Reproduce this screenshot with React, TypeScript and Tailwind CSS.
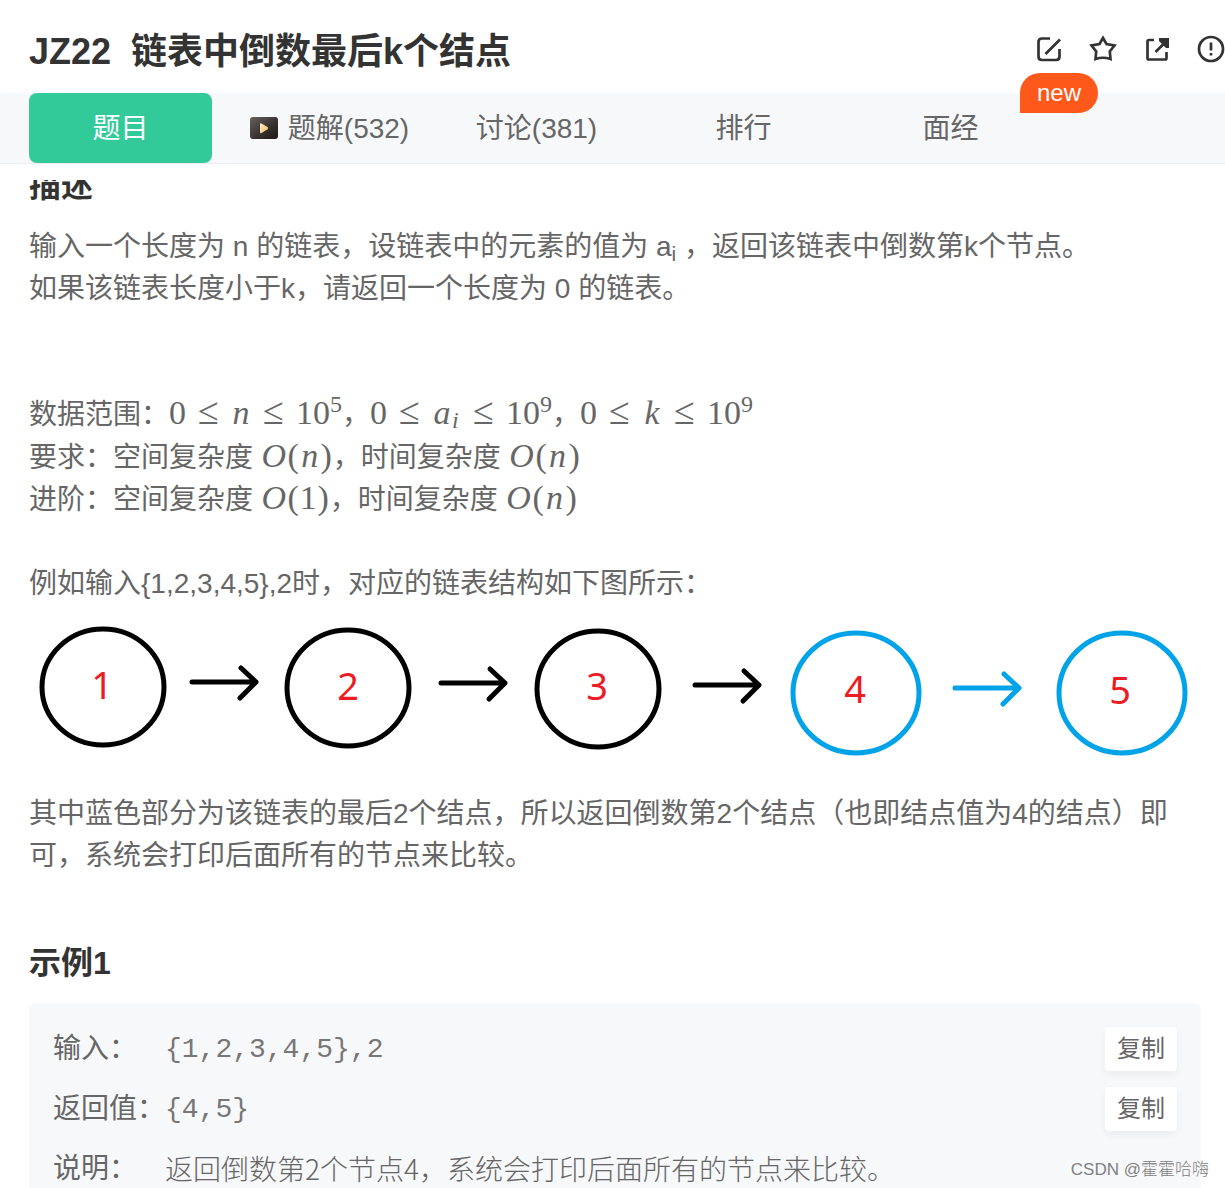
import type { ReactNode } from 'react'

const tabs = [
    { label: '题解(532)', video: true },
    { label: '讨论(381)' },
    { label: '排行' },
    { label: '面经', isNew: true },
]

const nodes = [
    { value: 1, cx: 74, cy: 82, rx: 61, ry: 58, tx: 73, ty: 94, color: '#000000' },
    { value: 2, cx: 319, cy: 83, rx: 61, ry: 58, tx: 319, ty: 95, color: '#000000' },
    { value: 3, cx: 569, cy: 84, rx: 61, ry: 58, tx: 568, ty: 95, color: '#000000' },
    { value: 4, cx: 827, cy: 88, rx: 63, ry: 60, tx: 826, ty: 98, color: '#00a2e8' },
    { value: 5, cx: 1093, cy: 88, rx: 63, ry: 60, tx: 1091, ty: 99, color: '#00a2e8' },
]

const arrows = [
    { x: 163, y: 77, color: '#000000' },
    { x: 412, y: 78, color: '#000000' },
    { x: 666, y: 80, color: '#000000' },
    { x: 926, y: 83, color: '#00a2e8' },
]

function IconButton({ label, children }: { label: string; children: ReactNode }) {
    return (
        <button type="button" aria-label={label} className="size-7 shrink-0 text-[#333333]">
            <svg viewBox="0 0 28 28" className="size-7" fill="none" stroke="currentColor" strokeWidth="2.7">
                {children}
            </svg>
        </button>
    )
}

function VideoIcon() {
    return (
        <svg viewBox="0 0 28 28" className="size-7 shrink-0" aria-hidden="true">
            <defs>
                <linearGradient id="video-bg" x1="0" y1="0" x2="1" y2="1">
                    <stop offset="0" stopColor="#666260" />
                    <stop offset="0.6" stopColor="#35302f" />
                    <stop offset="1" stopColor="#1c1817" />
                </linearGradient>
                <linearGradient id="video-play" x1="0" y1="0" x2="1" y2="1">
                    <stop offset="0" stopColor="#fff0c8" />
                    <stop offset="1" stopColor="#f5bd5e" />
                </linearGradient>
            </defs>
            <rect x="0" y="2" width="28" height="22" rx="3" fill="url(#video-bg)" />
            <path d="M10 9.500q0-1.800 1.500-1l6 3.500q1.500 1 0 2.200l-6 3.900q-1.500.7-1.500-1z" fill="url(#video-play)" />
        </svg>
    )
}

// Small helpers for inline formulas
function Rel() {
    return <span className="mx-2 inline-block w-[29px] text-center text-[38px] leading-none">≤</span>
}

function Var({ children }: { children: string }) {
    return <span className="inline-block w-5 text-center italic">{children}</span>
}

function Sup({ children }: { children: ReactNode }) {
    return <span className="relative -top-3 text-[24px] leading-none">{children}</span>
}

function MathText({ children }: { children: ReactNode }) {
    return (
        <span className="font-['Liberation_Serif','Noto_Sans_CJK_SC',serif] text-[34px] leading-none whitespace-nowrap">
            {children}
        </span>
    )
}

function BigO({ children }: { children: ReactNode }) {
    return (
        <MathText>
            <span className="inline-block w-[26px] text-center italic">O</span>
            <span className="inline-block w-[13px] text-center">(</span>
            {children}
            <span className="inline-block w-[13px] text-center">)</span>
        </MathText>
    )
}

function ListDiagram() {
    return (
        <svg viewBox="0 0 1172 188" className="block w-full" role="img" aria-label="1 → 2 → 3 → 4 → 5">
            {nodes.map(node => (
                <g key={node.value}>
                    <ellipse cx={node.cx} cy={node.cy} rx={node.rx} ry={node.ry} fill="none" stroke={node.color} strokeWidth="5" />
                    <text x={node.tx} y={node.ty} textAnchor="middle" fill="#ed1c24" className="font-['Noto_Sans',sans-serif] text-[38px]">
                        {node.value}
                    </text>
                </g>
            ))}
            {arrows.map(arrow => (
                <path
                    key={arrow.x}
                    d={`M${arrow.x} ${arrow.y}h64m-15 -14l15 14l-16 16`}
                    fill="none"
                    stroke={arrow.color}
                    strokeWidth="5"
                    strokeLinecap="round"
                    strokeLinejoin="round"
                />
            ))}
        </svg>
    )
}

function ExampleRow({ label, copy, children }: { label: string; copy?: boolean; children: ReactNode }) {
    return (
        <div className="flex h-11 items-center">
            <span className="w-28 shrink-0 whitespace-nowrap">{label}</span>
            <span className="flex-1 whitespace-nowrap">{children}</span>
            {copy && (
                <button type="button" className="h-11 w-[72px] rounded-sm bg-white text-[24px] leading-[44px] shadow-[0_4px_8px_rgba(0,0,0,0.05)]">
                    复制
                </button>
            )}
        </div>
    )
}

export default function App() {
    return (
        <div className="relative flex h-screen flex-col overflow-hidden bg-white font-['Liberation_Sans','Noto_Sans_CJK_SC',sans-serif] text-[28px] leading-[42px] text-[#666666]">
            <header className="flex h-[93px] shrink-0 items-center justify-between pt-[5px] pl-[29px]">
                <h1 className="pt-[5px] text-[36px] font-bold whitespace-pre text-[#333333]">JZ22  链表中倒数最后k个结点</h1>
                <div className="flex gap-[26px]">
                    <IconButton label="编辑">
                        <path d="M15 3.500H7Q3.500 3.500 3.500 7V21.500Q3.500 25 7 25H21Q24.500 25 24.500 21.500V14M10.500 19L25 4.500" />
                    </IconButton>
                    <IconButton label="收藏">
                        <path d="M14 3L17.500 9L25.500 10.500L20.800 16.500L21.500 24Q14 21.500 6.500 24L7.200 16.500L2.500 10.500L10.500 9Z" />
                    </IconButton>
                    <IconButton label="分享">
                        <path d="M11 5H6Q4.500 5 4.500 6.500V23Q4.500 24.500 6 24.500H22Q23.500 24.500 23.500 23V17M12.500 17L24 5.500" />
                        <path d="M16 3H26V13H23L16 6Z" fill="currentColor" stroke="none" />
                    </IconButton>
                    <IconButton label="反馈">
                        <circle cx="14" cy="14" r="12" />
                        <path d="M14 7.500V15.500M14 18V20.500" />
                    </IconButton>
                </div>
            </header>

            <nav className="flex h-[71px] shrink-0 border-b border-[#eceef1] bg-[#f7f8fa] pl-[29px]">
                <button type="button" className="w-[183px] shrink-0 rounded-lg bg-[#32ca99] pt-0.5 text-white">
                    题目
                </button>
                <div className="ml-[14px] flex">
                    {tabs.map(tab => (
                        <button key={tab.label} type="button" className="relative flex w-[207px] items-center justify-center gap-[10px] pt-0.5">
                            {tab.video && <VideoIcon />}
                            {tab.label}
                            {tab.isNew && (
                                <span className="absolute -top-5 left-[173px] h-10 w-[78px] rounded-[20px] rounded-bl-none bg-[#ff581b] text-center text-[24px] leading-10 text-white">
                                    new
                                </span>
                            )}
                        </button>
                    ))}
                </div>
            </nav>

            <main className="mt-4 min-h-0 flex-1 overflow-hidden pr-6 pl-[29px]">
                <h2 className="-mt-[18px] mb-4 text-[32px] leading-[48px] font-bold text-[#333333]">描述</h2>
                <p>
                    输入一个长度为 n 的链表，设链表中的元素的值为 a<sub className="text-[21px]">i</sub> ，返回该链表中倒数第k个节点。
                </p>
                <p>如果该链表长度小于k，请返回一个长度为 0 的链表。</p>
                <div className="mt-[82px]">
                    <p className="mb-px">
                        数据范围：
                        <MathText>
                            0<Rel /><Var>n</Var><Rel />10<Sup>5</Sup>
                        </MathText>
                        ，
                        <MathText>
                            0<Rel /><Var>a</Var>
                            <span className="relative top-1 inline-block w-[9px] text-[24px] leading-none italic">i</span>
                            <Rel />10<Sup>9</Sup>
                        </MathText>
                        ，
                        <MathText>
                            0<Rel /><Var>k</Var><Rel />10<Sup>9</Sup>
                        </MathText>
                    </p>
                    <p>
                        要求：空间复杂度 <BigO><Var>n</Var></BigO>，时间复杂度 <BigO><Var>n</Var></BigO>
                    </p>
                    <p>
                        进阶：空间复杂度 <BigO>1</BigO>，时间复杂度 <BigO><Var>n</Var></BigO>
                    </p>
                </div>
                <p className="mt-[42px]">{'例如输入{1,2,3,4,5},2时，对应的链表结构如下图所示：'}</p>
                <ListDiagram />
                <p>其中蓝色部分为该链表的最后2个结点，所以返回倒数第2个结点（也即结点值为4的结点）即可，系统会打印后面所有的节点来比较。</p>

                <h2 className="mt-[62px] mb-4 text-[32px] leading-[48px] font-bold text-[#333333]">示例1</h2>
                <section className="flex flex-col gap-4 rounded-lg bg-[#f7f8fa] p-6">
                    <ExampleRow label="输入：" copy>
                        <code className="font-['Liberation_Mono',monospace] text-[28px] text-[#777777]">{'{1,2,3,4,5},2'}</code>
                    </ExampleRow>
                    <ExampleRow label="返回值：" copy>
                        <code className="font-['Liberation_Mono',monospace] text-[28px] text-[#777777]">{'{4,5}'}</code>
                    </ExampleRow>
                    <ExampleRow label="说明：">
                        <span className="font-['Noto_Sans_CJK_SC',sans-serif] font-light">
                            返回倒数第2个节点4，系统会打印后面所有的节点来比较。
                        </span>
                    </ExampleRow>
                </section>
            </main>

            <span className="absolute right-4 bottom-1 font-['Liberation_Sans','Noto_Sans_CJK_SC',sans-serif] text-[17px] leading-7 font-light text-[#808080]">
                CSDN @霍霍哈嗨
            </span>
        </div>
    )
}
